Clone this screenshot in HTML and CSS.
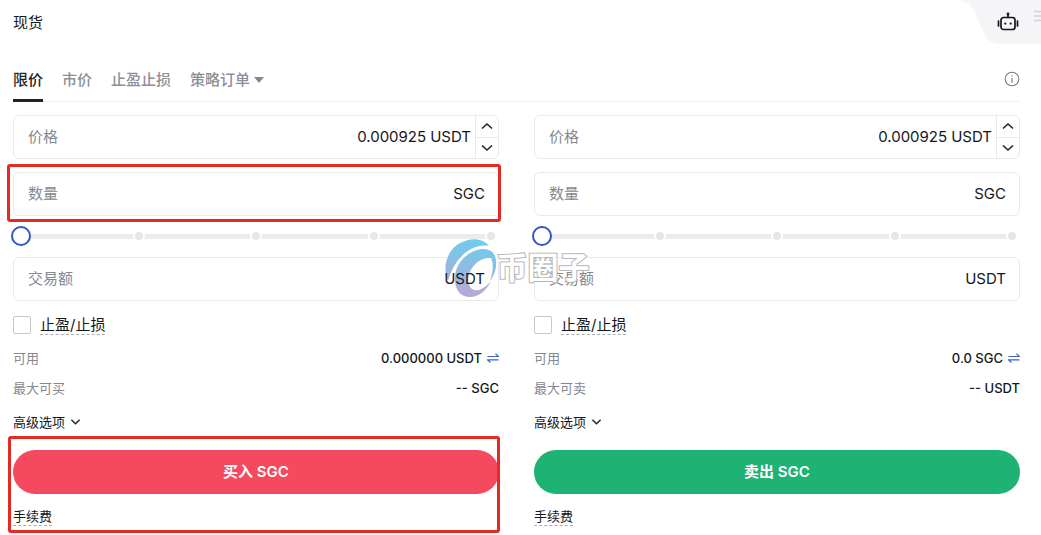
FILE: index.html
```html
<!DOCTYPE html>
<html lang="zh-CN">
<head>
  <meta charset="UTF-8">
  <meta name="viewport" content="width=device-width, initial-scale=1.0">
  <title>现货交易</title>
  <link rel="stylesheet" href="styles.css">
</head>
<body>
  <header class="header">
    <h1>现货</h1>
    <div class="corner">
      <svg class="corner-bg" viewBox="0 0 83 44" width="83" height="44" aria-hidden="true">
        <path d="M0 0C9 1 14 6 17 13L25 32C29 40 34 44 43 44H83V0Z" fill="#f5f5f7"/>
      </svg>
      <button class="icon-btn robot" aria-label="机器人">
        <svg viewBox="0 0 22 20" width="22" height="20" fill="none" stroke="#15171c" stroke-width="1.7" stroke-linecap="round">
          <rect x="4" y="5.500" width="14" height="12" rx="2.500"/>
          <path d="M11 5V2M1.500 9v5M20.500 9v5"/>
          <circle cx="11" cy="2" r=".6" fill="#15171c"/>
          <path d="M8.300 11.500v.1M13.700 11.500v.1" stroke-width="2.200"/>
        </svg>
      </button>
      <button class="icon-btn lines" aria-label="菜单">
        <svg viewBox="0 0 7 14" width="7" height="14" stroke="#cfd1d6" stroke-width="1.600">
          <path d="M0 2.500h7M0 7h7M0 11.500h7"/>
        </svg>
      </button>
    </div>
  </header>

  <nav class="tabs">
    <button class="tab active">限价</button>
    <button class="tab">市价</button>
    <button class="tab">止盈止损</button>
    <button class="tab">策略订单<span class="caret"></span></button>
    <button class="icon-btn info" aria-label="说明">
      <svg viewBox="0 0 16 16" width="16" height="16" fill="none" stroke="#777a80" stroke-width="1.1">
        <circle cx="8" cy="8" r="6.800"/>
        <path d="M8 7v4.800M8 4.200v1.400"/>
      </svg>
    </button>
  </nav>

  <main class="forms">
    <!-- 买入 -->
    <form class="order">
      <div class="field">
        <label for="buyPrice">价格</label>
        <input type="text" id="buyPrice" value="0.000925">
        <span class="unit">USDT</span>
        <div class="stepper">
          <button type="button" aria-label="增加"><svg viewBox="0 0 12 8" width="12" height="8"><path d="M1 6.500L6 2l5 4.500"/></svg></button>
          <button type="button" aria-label="减少"><svg viewBox="0 0 12 8" width="12" height="8"><path d="M1 1.500L6 6l5-4.500"/></svg></button>
        </div>
      </div>
      <div class="field marked">
        <label for="buyAmount">数量</label>
        <input type="text" id="buyAmount">
        <span class="unit">SGC</span>
      </div>
      <div class="slider">
        <div class="ticks"><i></i><i></i><i></i><i></i><i></i></div>
        <input type="range" min="0" max="100" value="0" aria-label="买入比例">
      </div>
      <div class="field">
        <label for="buyTotal">交易额</label>
        <input type="text" id="buyTotal">
        <span class="unit">USDT</span>
      </div>
      <div class="check">
        <input type="checkbox" id="buyTpsl">
        <label for="buyTpsl">止盈/止损</label>
      </div>
      <div class="row">
        <span>可用</span>
        <span class="value">0.000000 USDT
          <button type="button" class="icon-btn" aria-label="划转"><svg class="swap" viewBox="0 0 12 10" width="12" height="10"><path d="M.5 3.500h11L8.500.8M11.500 6.800H.5l3 2.700"/></svg></button>
        </span>
      </div>
      <div class="row">
        <span>最大可买</span>
        <span class="value">-- SGC</span>
      </div>
      <button type="button" class="more">高级选项<svg viewBox="0 0 12 8" width="11" height="8"><path d="M1.500 1.500L6 6l4.500-4.500"/></svg></button>
      <div class="submit marked">
        <button type="button" class="btn buy">买入 SGC</button>
        <a href="#" class="fee">手续费</a>
      </div>
    </form>

    <!-- 卖出 -->
    <form class="order">
      <div class="field">
        <label for="sellPrice">价格</label>
        <input type="text" id="sellPrice" value="0.000925">
        <span class="unit">USDT</span>
        <div class="stepper">
          <button type="button" aria-label="增加"><svg viewBox="0 0 12 8" width="12" height="8"><path d="M1 6.500L6 2l5 4.500"/></svg></button>
          <button type="button" aria-label="减少"><svg viewBox="0 0 12 8" width="12" height="8"><path d="M1 1.500L6 6l5-4.500"/></svg></button>
        </div>
      </div>
      <div class="field">
        <label for="sellAmount">数量</label>
        <input type="text" id="sellAmount">
        <span class="unit">SGC</span>
      </div>
      <div class="slider">
        <div class="ticks"><i></i><i></i><i></i><i></i><i></i></div>
        <input type="range" min="0" max="100" value="0" aria-label="卖出比例">
      </div>
      <div class="field">
        <label for="sellTotal">交易额</label>
        <input type="text" id="sellTotal">
        <span class="unit">USDT</span>
      </div>
      <div class="check">
        <input type="checkbox" id="sellTpsl">
        <label for="sellTpsl">止盈/止损</label>
      </div>
      <div class="row">
        <span>可用</span>
        <span class="value">0.0 SGC
          <button type="button" class="icon-btn" aria-label="划转"><svg class="swap" viewBox="0 0 12 10" width="12" height="10"><path d="M.5 3.500h11L8.500.8M11.500 6.800H.5l3 2.700"/></svg></button>
        </span>
      </div>
      <div class="row">
        <span>最大可卖</span>
        <span class="value">-- USDT</span>
      </div>
      <button type="button" class="more">高级选项<svg viewBox="0 0 12 8" width="11" height="8"><path d="M1.500 1.500L6 6l4.500-4.500"/></svg></button>
      <div class="submit">
        <button type="button" class="btn sell">卖出 SGC</button>
        <a href="#" class="fee">手续费</a>
      </div>
    </form>

    <!-- 水印 -->
    <div class="watermark">
      <svg viewBox="0 0 52 60" width="52" height="60" aria-hidden="true">
        <defs>
          <linearGradient id="wm" gradientUnits="userSpaceOnUse" x1="30" y1="4" x2="18" y2="58">
            <stop offset="0" stop-color="#70cbee"/>
            <stop offset=".5" stop-color="#8fbbe2"/>
            <stop offset="1" stop-color="#b9a9d4"/>
          </linearGradient>
        </defs>
        <path d="M3 43C-3 29 2 12 15 5C26-1 38 0 44 8C28 5 10 18 3 43Z" fill="url(#wm)"/>
        <path d="M12 51C5 34 16 17 32 12C39 10 47 11 50 18C53 27 50 36 45 43C48 34 49 26 46 20C36 19 27 27 24 36C21 46 26 54 34 52C39 50 43 47 46 43C42 52 34 59 25 59C19 59 14 56 12 51Z" fill="url(#wm)"/>
      </svg>
      <span>币圈子</span>
    </div>
  </main>
</body>
</html>
```
FILE: styles.css
```css
* {
  margin: 0;
  padding: 0;
  box-sizing: border-box;
}

body {
  font-family: Inter, "Noto Sans CJK SC", sans-serif;
  font-size: 15px;
  line-height: 20px;
  color: #15171c;
  background: #fff;
  overflow-x: hidden;
}

button, input {
  font: inherit;
  color: inherit;
  background: none;
  border: none;
  outline: none;
}

button {
  cursor: pointer;
}

svg {
  display: block;
}

.icon-btn {
  display: flex;
}

/* 顶部 */
.header {
  display: flex;
  justify-content: space-between;
  height: 57px;
  padding-left: 13px;
}

.header h1 {
  font-size: 15px;
  font-weight: 400;
  line-height: 45px;
}

.corner {
  position: relative;
  display: flex;
  align-items: center;
  gap: 15px;
  height: 44px;
}

.corner-bg {
  position: absolute;
  top: 0;
  right: 0;
  z-index: -1;
}

.lines {
  padding-bottom: 12px;
}

/* 订单类型 */
.tabs {
  display: flex;
  gap: 19px;
  height: 45px;
  margin: 0 21px 0 13px;
  border-bottom: 1px solid #f1f2f4;
}

.tab {
  display: flex;
  align-items: center;
  height: 45px;
  color: #8b8f98;
  font-weight: 500;
  border-top: 3px solid transparent;
  border-bottom: 3px solid transparent;
}

.tab.active {
  color: #202329;
  border-bottom-color: #202329;
}

.caret {
  margin-left: 4px;
  border: 5px solid transparent;
  border-top: 6px solid #85888f;
  border-bottom: none;
}

.info {
  align-items: center;
  margin-left: auto;
}

/* 买卖表单 */
.forms {
  position: relative;
  display: grid;
  grid-template-columns: 1fr 1fr;
  gap: 35px;
  padding: 13px 21px 9px 13px;
}

.order {
  display: flex;
  flex-direction: column;
  min-width: 0;
}

.field {
  display: flex;
  align-items: center;
  height: 44px;
  margin-bottom: 13px;
  padding-left: 14px;
  border: 1px solid #e8e9ec;
  border-radius: 6px;
}

.field label {
  color: #85888f;
}

.field input {
  flex: 1;
  min-width: 0;
  text-align: right;
}

.unit {
  position: relative;
  z-index: 2;
  margin: 0 13px 0 4px;
}

.stepper {
  display: flex;
  flex-direction: column;
  align-self: stretch;
  width: 23px;
  margin-left: -9px;
  border-left: 1px solid #e8e9ec;
}

.stepper button {
  flex: 1;
  display: flex;
  align-items: center;
  justify-content: center;
}

.stepper button + button {
  border-top: 1px solid #e8e9ec;
}

.stepper path, .more path {
  fill: none;
  stroke: #202329;
  stroke-width: 1.6;
}

/* 红框标注 */
.marked {
  position: relative;
}

.marked::after {
  content: "";
  position: absolute;
  inset: -9px -3px -7px -7px;
  border: 3px solid #e32b23;
  border-radius: 3px;
  pointer-events: none;
}

.submit.marked::after {
  inset: -14px -1px -7px -5px;
}

/* 滑块 */
.slider {
  display: grid;
  height: 20px;
  margin: -3px -2px 11px;
}

.ticks, .slider input {
  grid-area: 1 / 1;
}

.ticks {
  display: flex;
  align-items: center;
  justify-content: space-between;
  padding: 0 4px;
  background: linear-gradient(#ebecf0, #ebecf0) center / calc(100% - 20px) 5px no-repeat;
}

.ticks i {
  width: 12px;
  height: 12px;
  border: 2px solid #fff;
  border-radius: 50%;
  background: #e6e7ec;
}

.slider input {
  appearance: none;
  width: 100%;
  height: 20px;
}

.slider input::-webkit-slider-thumb {
  appearance: none;
  width: 20px;
  height: 20px;
  border: 2px solid #3156c4;
  border-radius: 50%;
  background: #fff;
}

/* 止盈止损 */
.check {
  display: flex;
  align-items: center;
  gap: 9px;
  height: 22px;
}

.check input {
  appearance: none;
  width: 18px;
  height: 18px;
  border: 1px solid #c6c8cd;
  border-radius: 2px;
}

.check label {
  line-height: 19px;
  border-bottom: 1px dashed #a9acb3;
}

/* 资产信息 */
.row {
  display: flex;
  justify-content: space-between;
  margin-top: 10px;
  font-size: 13px;
  color: #85888f;
}

.check + .row {
  margin-top: 12px;
}

.value {
  display: flex;
  align-items: center;
  gap: 5px;
  font-weight: 500;
  color: #15171c;
}

.swap path {
  fill: none;
  stroke: #3d62c9;
  stroke-width: 1.2;
}

.more {
  display: flex;
  align-items: center;
  gap: 5px;
  align-self: flex-start;
  margin: 14px 0 18px;
  font-size: 13px;
}

/* 提交按钮 */
.btn {
  display: block;
  width: 100%;
  height: 44px;
  margin-bottom: 12px;
  border-radius: 22px;
  color: #fff;
  font-weight: 600;
}

.buy {
  background: #f4495f;
}

.sell {
  background: #1eb274;
}

.fee {
  display: inline-block;
  line-height: 18px;
  font-size: 13px;
  color: inherit;
  text-decoration: none;
  border-bottom: 1px dashed #a9acb3;
}

/* 水印 */
.watermark {
  position: absolute;
  z-index: 1;
  top: 136px;
  left: calc(50% - 76px);
  display: flex;
  align-items: center;
  font-size: 31px;
  font-weight: 700;
  color: #fff;
  -webkit-text-stroke: 2px #b4b6ba;
  paint-order: stroke fill;
  pointer-events: none;
}
```
